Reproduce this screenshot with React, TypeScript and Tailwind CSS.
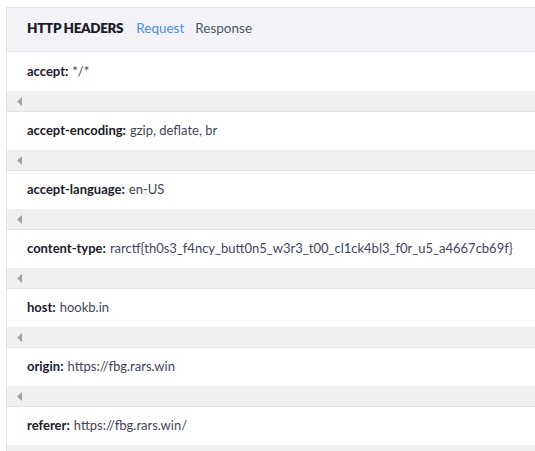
import React from "react";

const rows: [string, string][] = [
  ["accept", "*/*"],
  ["accept-encoding", "gzip, deflate, br"],
  ["accept-language", "en-US"],
  ["content-type", "rarctf{th0s3_f4ncy_butt0n5_w3r3_t00_cl1ck4bl3_f0r_u5_a4667cb69f}"],
  ["host", "hookb.in"],
  ["origin", "https://fbg.rars.win"],
  ["referer", "https://fbg.rars.win/"],
];

export default function App() {
  return (
    <div
      className="w-[535px] h-[451px] overflow-hidden bg-white pt-[7px] pl-[6px]"
      style={{ fontFamily: "Lato, 'Open Sans', sans-serif" }}
    >
      <div className="w-[560px] border-l border-t border-[#e3e3e8]">
        <div className="h-[44px] bg-[#f3f3f7] border-b border-[#e3e3e8] flex items-center pl-[20px] pb-[3px] text-[13.5px]">
          <span className="font-extrabold text-[#1b1b2a] tracking-[-0.35px]">HTTP HEADERS</span>
          <span className="ml-[13px] text-[#4a8fe3]">Request</span>
          <span className="ml-[11px] text-[#4d5566]">Response</span>
        </div>
        <div className="pt-[1px]">
          {rows.map(([k, v]) => (
            <div key={k}>
              <div className="h-[38px] flex items-center pl-[20px] text-[13px] whitespace-nowrap">
                <span className="font-bold text-[#1b1b2a]">{k}:</span>
                <span className="ml-[4px] text-[#3f4656]">{v}</span>
              </div>
              <div className="h-[21px] bg-[#f0f0f0] border-b border-[#e3e3e3] flex items-center pl-[10px]">
                <svg width="5" height="9" viewBox="0 0 5 9">
                  <polygon points="5,0 5,9 0,4.5" fill="#a3a3a3" />
                </svg>
              </div>
            </div>
          ))}
        </div>
      </div>
    </div>
  );
}
